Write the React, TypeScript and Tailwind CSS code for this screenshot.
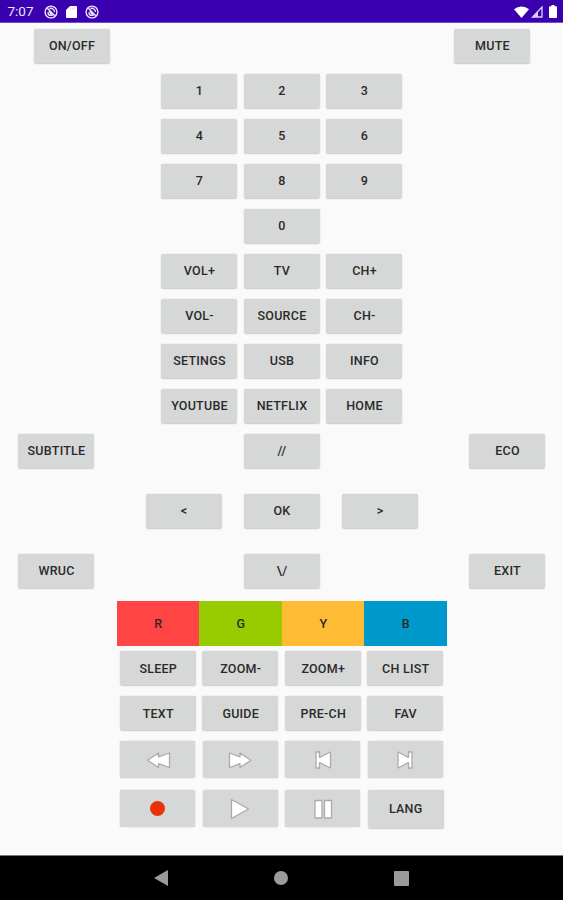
import React from "react";

const keyBase =
  "flex w-[76px] shrink-0 items-center justify-center rounded-[2px] bg-[#d6d8d7] text-[12.5px] font-medium text-[#2a2a2a] shadow-[0_0.5px_1.5px_rgba(0,0,0,0.2)]";

function Key({ label }: { label: string }) {
  return <button className={`${keyBase} h-[34px] whitespace-nowrap pl-px pt-[2.5px] tracking-[0.25px]`}>{label}</button>;
}

function IconKey({ label, children }: { label: string; children: React.ReactNode }) {
  return (
    <button
      aria-label={label}
      className="flex h-[37px] w-[75px] shrink-0 items-center justify-center rounded-[2px] bg-[#d6d8d7] shadow-[0_0_1.5px_rgba(0,0,0,0.25)]"
    >
      {children}
    </button>
  );
}

function Glyph({ d }: { d: string }) {
  return (
    <svg width="28" height="24" viewBox="0 0 28 24" fill="#fff" stroke="#a9abaa" strokeWidth="1.3" strokeLinejoin="round">
      <path d={d} />
    </svg>
  );
}

function Ball() {
  return (
    <svg width="14" height="14" viewBox="0 0 14 14" fill="none" stroke="#ece6fb" strokeWidth="1.4">
      <circle cx="7" cy="7" r="5.9" />
      <path d="M3.3 3.2 10.8 10.8M4 7.2c0 2 1.4 3.2 3 3.2 1 0 1.8-.3 2.4-1M5.5 3.5c2.5-.8 5 .9 5 3.5M5 6l2.5 3.5" />
    </svg>
  );
}

function StatusBar() {
  return (
    <header className="flex h-[23px] items-center justify-between border-b border-[#6f4dcb] bg-[#3a00b0] pl-[7.5px] pr-[6px] text-white">
      <div className="flex items-center pt-[2px]">
        <span className="w-[36px] text-[13.5px] leading-none text-[#ece6fb]">7:07</span>
        <Ball />
        <svg className="ml-[8px]" width="11" height="12" viewBox="0 0 11 12" fill="#fff">
          <path d="M4 0h6q1 0 1 1v10q0 1-1 1H1q-1 0-1-1V4z" />
          <path d="M4.5 1.5v2M6.5 1.5v2M8.5 1.5v2" stroke="#c9bbee" strokeWidth=".7" />
        </svg>
        <span className="ml-[8px]">
          <Ball />
        </span>
      </div>
      <div className="flex items-center pt-[1px]">
        <svg width="15" height="12" viewBox="0 0 15 12" fill="#fff">
          <path d="M7.5 12 0 3.3Q3.3.5 7.5.5T15 3.3z" />
        </svg>
        <svg className="ml-[2px]" width="12" height="12" viewBox="0 0 12 12" fill="none" stroke="#ddd3f6" strokeWidth="1.3">
          <path d="M11 1v10H1.5z" />
          <path d="M7 5.5V11H2z" fill="#ddd3f6" stroke="none" />
        </svg>
        <svg className="ml-[6px]" width="8" height="13" viewBox="0 0 8 13" fill="#fff">
          <path d="M2.5 0h3v1.3H7q1 0 1 1V12q0 1-1 1H1q-1 0-1-1V2.3q0-1 1-1h1.5z" />
        </svg>
      </div>
    </header>
  );
}

const keypad = [
  ["1", "2", "3"],
  ["4", "5", "6"],
  ["7", "8", "9"],
  ["0"],
  ["VOL+", "TV", "CH+"],
  ["VOL-", "SOURCE", "CH-"],
  ["SETINGS", "USB", "INFO"],
  ["YOUTUBE", "NETFLIX", "HOME"],
];

const colours = [
  { label: "R", bg: "bg-[#ff4444]" },
  { label: "G", bg: "bg-[#99cc00]" },
  { label: "Y", bg: "bg-[#ffbb33]" },
  { label: "B", bg: "bg-[#0099cc]" },
];

const functions = [
  ["SLEEP", "ZOOM-", "ZOOM+", "CH LIST"],
  ["TEXT", "GUIDE", "PRE-CH", "FAV"],
];

export default function App() {
  return (
    <div className="flex h-[900px] w-[563px] flex-col overflow-hidden bg-[#fafafa] font-['Roboto','Liberation_Sans',sans-serif]">
      <StatusBar />
      <main className="flex-1">
        <div className="flex h-[45px] justify-between pl-[33.5px] pr-[33px] pt-[5.5px]">
          <Key label="ON/OFF" />
          <Key label="MUTE" />
        </div>

        {keypad.map((row) => (
          <div key={row[0]} className="flex h-[45px] justify-center gap-[6.5px] pt-[5.5px]">
            {row.map((label) => (
              <Key key={label} label={label} />
            ))}
          </div>
        ))}

        <div className="flex h-[60px] justify-between px-[18px] pt-[5.5px]">
          <Key label="SUBTITLE" />
          <Key label="//" />
          <Key label="ECO" />
        </div>
        <div className="flex h-[60px] justify-center gap-[22px] pt-[5.5px]">
          <Key label="<" />
          <Key label="OK" />
          <Key label=">" />
        </div>
        <div className="flex h-[53px] justify-between px-[18px] pt-[5.5px]">
          <Key label="WRUC" />
          <Key label={"\\/"} />
          <Key label="EXIT" />
        </div>

        <div className="mx-auto grid h-[44.5px] w-[330px] grid-cols-4">
          {colours.map(({ label, bg }) => (
            <button key={label} className={`${bg} pl-px pt-[1.5px] text-[12.5px] font-medium text-[#2a2a2a]`}>
              {label}
            </button>
          ))}
        </div>

        <div className="pt-[0.5px]">
          {functions.map((row) => (
            <div key={row[0]} className="flex h-[45px] justify-center gap-[6.5px] pt-[5px]">
              {row.map((label) => (
                <Key key={label} label={label} />
              ))}
            </div>
          ))}
        </div>

        <div className="flex h-[49px] justify-center gap-[7.5px] pt-[5px]">
          <IconKey label="Rewind">
            <Glyph d="M14.5 5v3.8L25.5 5v14.5L14.5 15.7v3.8L3.5 12.2z" />
          </IconKey>
          <IconKey label="Fast forward">
            <Glyph d="M14 5v3.8L3.5 5v14.5L14 15.7v3.8L25 12.2z" />
          </IconKey>
          <IconKey label="Previous">
            <Glyph d="M7 4h3.5v5.5L21.5 4v16l-11-5.5V20H7z" />
          </IconKey>
          <IconKey label="Next">
            <Glyph d="M21 4h-3.5v5.5L7 4v16l10.5-5.5V20H21z" />
          </IconKey>
        </div>
        <div className="flex h-[49px] justify-center gap-[7.5px] pt-[5px]">
          <IconKey label="Record">
            <span className="size-[15px] rounded-full bg-[#ea3208]" />
          </IconKey>
          <IconKey label="Play">
            <Glyph d="M5.5 2.5v19L22.5 12z" />
          </IconKey>
          <IconKey label="Pause">
            <Glyph d="M6 3.5h7v17.5H6zM15.5 3.5h7v17.5h-7z" />
          </IconKey>
          <button className={`${keyBase} -mr-px h-[38px] pt-px tracking-[0.25px]`}>LANG</button>
        </div>
      </main>

      <nav className="flex h-[45px] items-center justify-center gap-[106px] border-t border-[#777] bg-black">
        <svg width="14" height="16" viewBox="0 0 14 16" fill="#9b9b9b">
          <path d="M14 0v16L0 8z" />
        </svg>
        <span className="size-[14px] rounded-full bg-[#9b9b9b]" />
        <span className="size-[15px] rounded-[1px] bg-[#9b9b9b]" />
      </nav>
    </div>
  );
}
